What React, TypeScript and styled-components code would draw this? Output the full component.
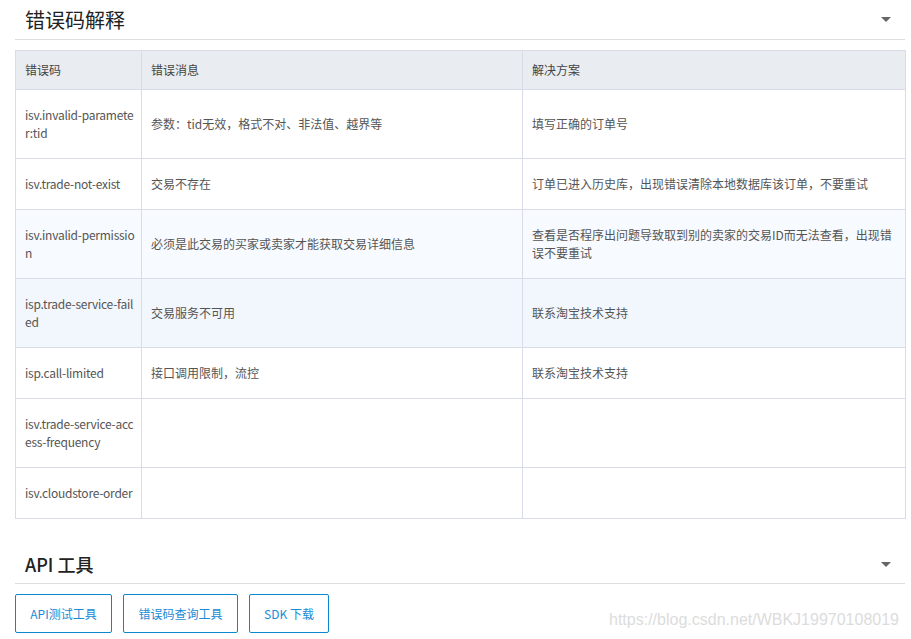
import React from "react";
import styled, { createGlobalStyle } from "styled-components";

const Global = createGlobalStyle`
  *, *::before, *::after { box-sizing: border-box; }
  html, body { margin: 0; padding: 0; background: #fff; }
  body { font-family: "Noto Sans CJK SC", sans-serif; }
`;

const Page = styled.div`
  padding: 0 6px 0 15px;
  width: 911px;
`;

const SectionHead = styled.div<{ $h: number; $mt?: number }>`
  display: flex;
  align-items: center;
  justify-content: space-between;
  height: ${(p) => p.$h}px;
  margin-top: ${(p) => p.$mt || 0}px;
  padding: 0 14px 0 10px;
  border-bottom: 1px solid #dddddd;
`;

const Title = styled.h2<{ $bold?: boolean }>`
  margin: 0;
  font-family: "Noto Sans CJK SC", sans-serif;
  font-size: ${(p) => (p.$bold ? "18px" : "20px")};
  font-weight: ${(p) => (p.$bold ? 500 : 400)};
  color: #222;
  line-height: 1;
`;

const Caret = styled.span`
  width: 0;
  height: 0;
  border-left: 5px solid transparent;
  border-right: 5px solid transparent;
  border-top: 5px solid #666;
`;

const Table = styled.table`
  margin-top: 10px;
  width: 890px;
  border-collapse: collapse;
  table-layout: fixed;
  border: 1px solid #d9dce8;
  font-size: 12px;
  color: #555;
  font-family: "Noto Sans CJK SC", sans-serif;
`;

const Col = styled.col<{ $w: number }>`
  width: ${(p) => p.$w}px;
`;

const Th = styled.th`
  background: #e9ecf0;
  text-align: left;
  font-weight: 400;
  padding: 10px 8px 10px 9px;
  line-height: 18px;
  color: #444;
  border: 1px solid #d9dce8;
`;

const Tr = styled.tr<{ $bg?: string }>`
  background: ${(p) => p.$bg || "#fff"};
`;

const Td = styled.td<{ $code?: boolean }>`
  padding: 16px ${(p) => (p.$code ? 6 : 8)}px 16px 9px;
  line-height: 18px;
  border: 1px solid #d9dce8;
  word-break: break-all;
  vertical-align: middle;
  letter-spacing: ${(p) => (p.$code ? "-0.25px" : "0")};
`;

const Buttons = styled.div`
  display: flex;
  gap: 11px;
  margin-top: 10px;
  align-items: center;
  position: relative;
`;

const Btn = styled.button<{ $w: number }>`
  width: ${(p) => p.$w}px;
  height: 39px;
  background: #fff;
  border: 1px solid #0b87d0;
  border-radius: 2px;
  color: #1a8bd5;
  font-size: 12px;
  font-family: "Noto Sans CJK SC", sans-serif;
  padding: 0;
`;

const Watermark = styled.span`
  position: absolute;
  right: 6px;
  top: 17px;
  font-family: "Liberation Sans", Arial, sans-serif;
  font-size: 16px;
  line-height: 18px;
  color: #dcdcdc;
`;

const rows = [
  ["isv.invalid-parameter:tid", "参数：tid无效，格式不对、非法值、越界等", "填写正确的订单号", ""],
  ["isv.trade-not-exist", "交易不存在", "订单已进入历史库，出现错误清除本地数据库该订单，不要重试", ""],
  ["isv.invalid-permission", "必须是此交易的买家或卖家才能获取交易详细信息", "查看是否程序出问题导致取到别的卖家的交易ID而无法查看，出现错误不要重试", "#f7fafe"],
  ["isp.trade-service-failed", "交易服务不可用", "联系淘宝技术支持", "#f2f7fd"],
  ["isp.call-limited", "接口调用限制，流控", "联系淘宝技术支持", ""],
  ["isv.trade-service-access-frequency", "", "", ""],
  ["isv.cloudstore-order", "", "", ""],
];

export default function App() {
  return (
    <>
      <Global />
      <Page>
        <SectionHead $h={40}>
          <Title>错误码解释</Title>
          <Caret />
        </SectionHead>
        <Table>
          <colgroup>
            <Col $w={126} />
            <Col $w={381} />
            <Col $w={383} />
          </colgroup>
          <thead>
            <tr>
              <Th>错误码</Th>
              <Th>错误消息</Th>
              <Th>解决方案</Th>
            </tr>
          </thead>
          <tbody>
            {rows.map((r) => (
              <Tr key={r[0]} $bg={r[3]}>
                <Td $code>{r[0]}</Td>
                <Td>{r[1]}</Td>
                <Td>{r[2]}</Td>
              </Tr>
            ))}
          </tbody>
        </Table>
        <SectionHead $h={39} $mt={26}>
          <Title $bold>API 工具</Title>
          <Caret />
        </SectionHead>
        <Buttons>
          <Btn $w={97}>API测试工具</Btn>
          <Btn $w={115}>错误码查询工具</Btn>
          <Btn $w={80}>SDK 下载</Btn>
          <Watermark>https://blog.csdn.net/WBKJ19970108019</Watermark>
        </Buttons>
      </Page>
    </>
  );
}
